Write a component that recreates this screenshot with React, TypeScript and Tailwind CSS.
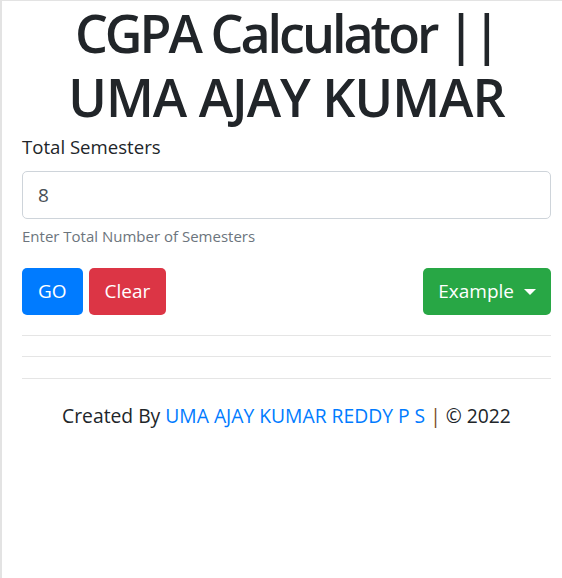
export default function App() {
  return (
    <div
      className="min-h-[578px] w-[562px] border-l-2 border-t border-[#e3e3e3] bg-white text-[#212529]"
      style={{ fontFamily: '"Open Sans", "Noto Sans", sans-serif' }}
    >
      <div className="pl-[20px] pr-[11px]">
        <h1 className="text-center text-[52px] font-semibold leading-[64px]">
          <span className="tracking-[-3px]">CGPA Calculator ||</span>
          <br />
          <span className="tracking-[-1px]">UMA AJAY KUMAR</span>
        </h1>

        <div className="mt-[3px]">
          <label className="block text-[18.6px] leading-[30px]">Total Semesters</label>
          <input
            readOnly
            value="8"
            className="mt-[9px] block h-[48px] w-full rounded-[5px] border border-[#ced4da] px-[15px] text-[19px] text-[#495057] outline-none"
          />
          <small className="mt-[5px] block text-[15px] leading-[24px] text-[#6c757d]">
            Enter Total Number of Semesters
          </small>
        </div>

        <div className="mt-[20px] flex items-center">
          <button className="h-[47px] rounded-[5px] bg-[#007bff] px-[16px] text-[19px] text-white">GO</button>
          <button className="ml-[6px] h-[47px] rounded-[5px] bg-[#dc3545] px-[16px] text-[19px] text-white">
            Clear
          </button>
          <button className="ml-auto flex h-[47px] items-center rounded-[5px] bg-[#28a745] px-[15px] text-[19px] text-white">
            Example
            <span className="ml-[10px] inline-block h-0 w-0 border-x-[6px] border-t-[6px] border-x-transparent border-t-white" />
          </button>
        </div>

        <hr className="mt-[20px] border-t border-[#e5e5e5]" />
        <hr className="mt-[20px] border-t border-[#e5e5e5]" />
        <hr className="mt-[21px] border-t border-[#e5e5e5]" />

        <p className="mt-[22px] text-center text-[19.3px] leading-[30px]">
          Created By <span className="text-[#007bff]">UMA AJAY KUMAR REDDY P S</span>{" "}
          <span className="text-[#7a4a1c]">|</span> © 2022
        </p>
      </div>
    </div>
  );
}
